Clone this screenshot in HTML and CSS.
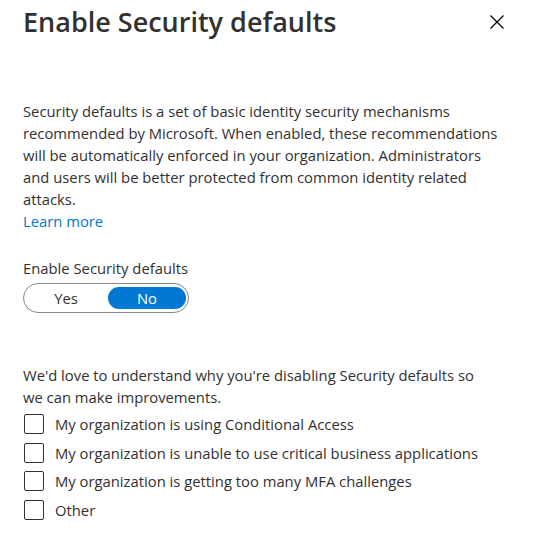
FILE: index.html
```html
<!DOCTYPE html>
<html>
<head>
<meta charset="utf-8">
<link rel="stylesheet" href="styles.css">
</head>
<body>
<div class="panel">
  <div class="header">
    <h1 class="title">Enable Security defaults</h1>
    <button class="close" aria-label="Close">
      <svg width="14" height="14" viewBox="0 0 14 14"><path d="M0.5 0.5 L13.5 13.5 M13.5 0.5 L0.5 13.5" stroke="#000" stroke-width="1.2" fill="none"/></svg>
    </button>
  </div>
  <div class="body">
    <p class="desc">Security defaults is a set of basic identity security mechanisms recommended by Microsoft. When enabled, these recommendations will be automatically enforced in your organization. Administrators and users will be better protected from common identity related attacks.<br><a class="link" href="#">Learn more</a></p>
    <div class="field">
      <div class="label">Enable Security defaults</div>
      <div class="toggle">
        <span class="opt">Yes</span>
        <span class="opt opt-on">No</span>
      </div>
    </div>
    <p class="survey">We'd love to understand why you're disabling Security defaults so we can make improvements.</p>
    <div class="checks">
      <label class="check"><span class="box"></span><span>My organization is using Conditional Access</span></label>
      <label class="check"><span class="box"></span><span>My organization is unable to use critical business applications</span></label>
      <label class="check"><span class="box"></span><span>My organization is getting too many MFA challenges</span></label>
      <label class="check"><span class="box"></span><span>Other</span></label>
    </div>
  </div>
</div>
</body>
</html>
```
FILE: styles.css
```css
html, body { margin: 0; padding: 0; background: #fff; }
body { font-family: "Open Sans", "Noto Sans", sans-serif; color: #323130; font-size: 14.8px; }
.panel { padding: 4px 20px 0 23px; width: 496px; }
.header { display: flex; justify-content: space-between; align-items: center; height: 36px; }
.title { margin: 0; font-size: 27px; font-weight: 600; line-height: 36px; color: #323130; }
.close { border: 0; background: none; padding: 0; margin-right: 15px; width: 14px; height: 14px; display: flex; }
.body { width: 477px; }
.desc { margin: 60px 0 0; line-height: 22px; }
.link { color: #0078d4; text-decoration: none; }
.field { margin-top: 25px; }
.label { line-height: 22px; }
.toggle { margin-top: 4px; display: flex; align-items: center; width: 162px; height: 28px; border: 1px solid #8a8886; border-radius: 15px; padding: 0 2px 0 0; box-sizing: content-box; }
.opt { flex: 1; text-align: center; line-height: 22px; height: 22px; border-radius: 11px; }
.opt-on { background: #0078d4; color: #fff; flex: 0 0 78px; }
.survey { margin: 51px 0 0; line-height: 22px; max-width: 468px; }
.checks { margin-top: 5px; display: flex; flex-direction: column; gap: 6.6px; }
.check { display: flex; align-items: center; gap: 11px; line-height: 22px; white-space: nowrap; }
.box { width: 20px; height: 20px; border: 1px solid #323130; border-radius: 2px; box-sizing: border-box; margin-left: 1px; flex: none; }
```
